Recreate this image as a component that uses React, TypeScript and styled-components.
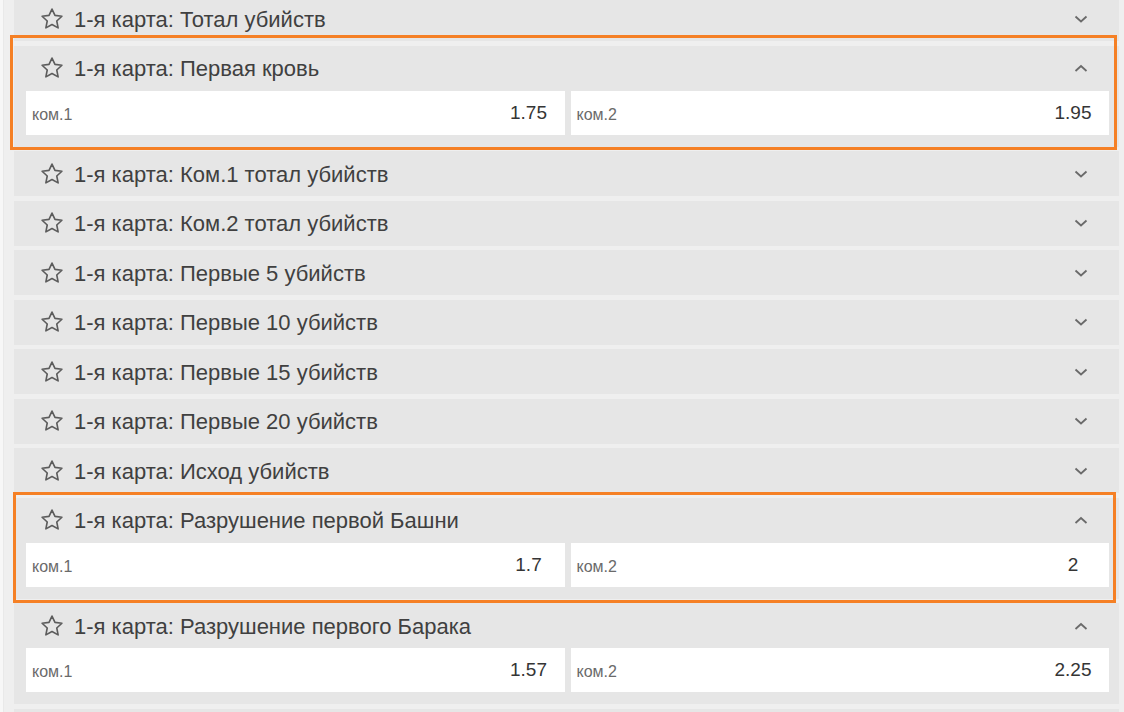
import { createGlobalStyle, styled } from "styled-components";

type Odd = { label: string; value: string };
type Market = { title: string; odds?: Odd[]; frame?: string };

const markets: Market[] = [
  { title: "1-я карта: Тотал убийств" },
  {
    title: "1-я карта: Первая кровь",
    odds: [
      { label: "ком.1", value: "1.75" },
      { label: "ком.2", value: "1.95" },
    ],
    frame: "-11px 2px -3px -4px",
  },
  { title: "1-я карта: Ком.1 тотал убийств" },
  { title: "1-я карта: Ком.2 тотал убийств" },
  { title: "1-я карта: Первые 5 убийств" },
  { title: "1-я карта: Первые 10 убийств" },
  { title: "1-я карта: Первые 15 убийств" },
  { title: "1-я карта: Первые 20 убийств" },
  { title: "1-я карта: Исход убийств" },
  {
    title: "1-я карта: Разрушение первой Башни",
    odds: [
      { label: "ком.1", value: "1.7" },
      { label: "ком.2", value: "2" },
    ],
    frame: "-6px 3px -4px -1px",
  },
  {
    title: "1-я карта: Разрушение первого Барака",
    odds: [
      { label: "ком.1", value: "1.57" },
      { label: "ком.2", value: "2.25" },
    ],
  },
  { title: "1-я карта: Разрушение первого Трона" },
];

function StarIcon() {
  return (
    <svg width="26" height="26" viewBox="0 0 24 24">
      <path
        d="M12 2.8l2.75 5.9 6.4.75-4.75 4.4 1.25 6.35L12 17.05 6.35 20.2l1.25-6.35-4.75-4.4 6.4-.75z"
        fill="none"
        stroke="#5c5c5c"
        strokeWidth="1.5"
        strokeLinejoin="round"
      />
    </svg>
  );
}

function Chevron({ up }: { up: boolean }) {
  return (
    <svg width="16" height="10" viewBox="0 0 16 10">
      <polyline
        points={up ? "2.5,8 8,3 13.5,8" : "2.5,2.5 8,7.5 13.5,2.5"}
        fill="none"
        stroke="#6a6a6a"
        strokeWidth="1.8"
      />
    </svg>
  );
}

export default function App() {
  return (
    <>
      <GlobalStyle />
      <Page>
        <List>
          {markets.map((m) => (
            <Block key={m.title} $open={!!m.odds} $frame={m.frame}>
              <Header>
                <StarIcon />
                <Title>{m.title}</Title>
                <Toggle>
                  <Chevron up={!!m.odds} />
                </Toggle>
              </Header>
              {m.odds && (
                <Odds>
                  {m.odds.map((o) => (
                    <Cell key={o.label}>
                      <Label>{o.label}</Label>
                      <Value>{o.value}</Value>
                    </Cell>
                  ))}
                </Odds>
              )}
            </Block>
          ))}
        </List>
      </Page>
    </>
  );
}

const GlobalStyle = createGlobalStyle`
  html, body {
    margin: 0;
    height: 100%;
    overflow: hidden;
    background: #f7f7f7;
    font-family: "Liberation Sans", Arial, sans-serif;
  }
`;

const Page = styled.main`
  margin-left: 3px;
  border-left: 1px solid #e9e9e9;
  background: #efefef;
  padding: 0 5px 0 10px;
  height: 712px;
  overflow: hidden;
`;

const List = styled.div`
  display: flex;
  flex-direction: column;
  gap: 4.5px;
  margin-top: -4px;
`;

const Block = styled.section<{ $open: boolean; $frame?: string }>`
  position: relative;
  background: #e6e6e6;
  padding-bottom: ${(p) => (p.$open ? "12px" : "0")};

  ${(p) =>
    p.$frame &&
    `
    &::after {
      content: "";
      position: absolute;
      inset: ${p.$frame};
      border: 3px solid #f58025;
      pointer-events: none;
    }
  `}
`;

const Header = styled.div`
  display: flex;
  align-items: center;
  height: 45px;
  padding: 0 30px 0 25px;
  gap: 9px;
  color: #404040;
`;

const Title = styled.span`
  flex: 1;
  font-size: 22px;
  padding-top: 2px;
`;

const Toggle = styled.span`
  display: flex;
  align-items: center;
`;

const Odds = styled.div`
  display: grid;
  grid-template-columns: 1fr 1fr;
  gap: 6px;
  padding: 0 10px 0 12px;
`;

const Cell = styled.div`
  display: flex;
  align-items: center;
  justify-content: space-between;
  height: 44px;
  background: #fff;
  padding: 0 10px 0 6px;
`;

const Label = styled.span`
  font-size: 16px;
  color: #6a6a6a;
  padding-top: 4px;
`;

const Value = styled.span`
  width: 52px;
  text-align: center;
  font-size: 19px;
  color: #353535;
`;
